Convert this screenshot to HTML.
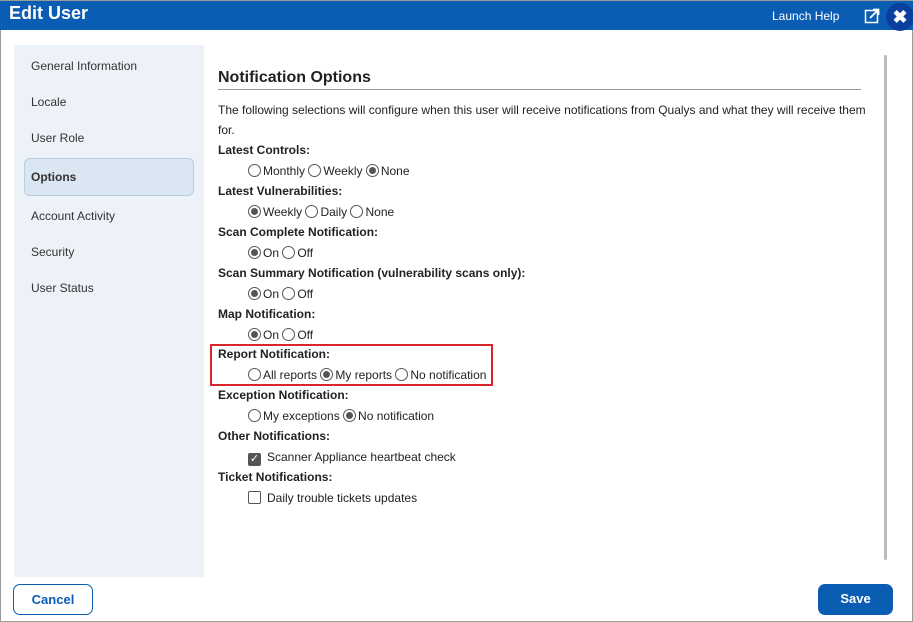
<!DOCTYPE html><html><head><style>
*{box-sizing:border-box;margin:0;padding:0}
body{width:913px;height:622px;position:relative;font-family:"Liberation Sans",Arial,sans-serif;background:#fff;overflow:hidden;font-size:12px;color:#222}
.frame{position:absolute;inset:0;border:1px solid #9a9a9a}
.hdr{position:absolute;left:0;top:0;width:913px;height:30px;background:#0b5db3;border-top:1px solid #9a9a9a}
.hdr .t{position:absolute;left:9px;top:2px;color:#fff;font-weight:bold;font-size:18px}
.hdr .h{position:absolute;left:772px;top:8px;color:#fff;font-size:12px}
.x{position:absolute;left:886px;top:2px;width:28px;height:28px;border-radius:50%;background:#0a3fa0;color:#fff;font-weight:bold;font-size:18px;text-align:center;line-height:28px}
.side{position:absolute;left:14px;top:45px;width:190px;height:532px;background:#edf1f8}
.side div{position:absolute;left:17px;font-size:12px;color:#333}
.sel{position:absolute;left:24px;top:158px;width:170px;height:38px;background:#dbe6f3;border:1px solid #b8cde4;border-radius:6px}
.l{position:absolute;left:218px;font-size:12px;white-space:nowrap}
.b{font-weight:bold}
.r{display:inline-block;width:13px;height:13px;border:1px solid #555;border-radius:50%;vertical-align:-2px;margin-right:2px;position:relative;background:#fff}
.r.on::after{content:"";position:absolute;left:2px;top:2px;width:7px;height:7px;border-radius:50%;background:#555}
.cb{display:inline-block;width:13px;height:13px;border:1px solid #555;border-radius:2px;vertical-align:-2px;margin-right:6px;position:relative}
.cb.on{background:#555;color:#fff;font-size:11px;line-height:11px;text-align:center}
.o{left:248px}
.btn{position:absolute;top:584px;height:31px;border-radius:7px;font-weight:bold;font-size:13px;text-align:center;line-height:30px}
</style></head><body>
<div class="frame"></div>
<div class="hdr"><div class="t">Edit User</div><div class="h">Launch Help</div>
<svg style="position:absolute;left:864px;top:7px" width="16" height="16" viewBox="0 0 16 16"><rect x="1.5" y="2.5" width="12" height="12" fill="none" stroke="#fff" stroke-width="1.5"/><path d="M6 10L14 2M9 1.5h5.5V7" fill="none" stroke="#fff" stroke-width="1.8"/></svg>
<div class="x">✖</div></div>
<div class="side">
<div style="top:14px">General Information</div><div style="top:50px">Locale</div><div style="top:86px">User Role</div>
<div style="top:164px">Account Activity</div><div style="top:200px">Security</div><div style="top:236px">User Status</div></div>
<div class="sel"></div><div style="position:absolute;left:31px;top:170px;font-weight:bold;color:#333">Options</div>
<div style="position:absolute;left:884px;top:55px;width:3px;height:505px;background:#bbb;border-radius:2px"></div>
<div class="l b" style="top:69px;font-size:16px">Notification Options</div>
<div style="position:absolute;left:218px;top:89px;width:643px;height:1px;background:#999"></div>
<div class="l" style="top:103px">The following selections will configure when this user will receive notifications from Qualys and what they will receive them</div>
<div class="l" style="top:123px">for.</div>
<div class="l b" style="top:143px">Latest Controls:</div>
<div class="l o" style="top:164px"><span class="r"></span>Monthly <span class="r"></span>Weekly <span class="r on"></span>None</div>
<div class="l b" style="top:184px">Latest Vulnerabilities:</div>
<div class="l o" style="top:205px"><span class="r on"></span>Weekly <span class="r"></span>Daily <span class="r"></span>None</div>
<div class="l b" style="top:225px">Scan Complete Notification:</div>
<div class="l o" style="top:246px"><span class="r on"></span>On <span class="r"></span>Off</div>
<div class="l b" style="top:266px">Scan Summary Notification (vulnerability scans only):</div>
<div class="l o" style="top:287px"><span class="r on"></span>On <span class="r"></span>Off</div>
<div class="l b" style="top:307px">Map Notification:</div>
<div class="l o" style="top:328px"><span class="r on"></span>On <span class="r"></span>Off</div>
<div style="position:absolute;left:210px;top:344px;width:283px;height:42px;border:2px solid #d9262b"></div>
<div class="l b" style="top:347px">Report Notification:</div>
<div class="l o" style="top:368px"><span class="r"></span>All reports <span class="r on"></span>My reports <span class="r"></span>No notification</div>
<div class="l b" style="top:388px">Exception Notification:</div>
<div class="l o" style="top:409px"><span class="r"></span>My exceptions <span class="r on"></span>No notification</div>
<div class="l b" style="top:429px">Other Notifications:</div>
<div class="l o" style="top:450px"><span class="cb on" style="vertical-align:-1px">✓</span>Scanner Appliance heartbeat check</div>
<div class="l b" style="top:470px">Ticket Notifications:</div>
<div class="l o" style="top:491px"><span class="cb"></span>Daily trouble tickets updates</div>
<div class="btn" style="left:13px;width:80px;border:1px solid #0b5db3;color:#0b5db3;background:#fff">Cancel</div>
<div class="btn" style="left:818px;width:75px;background:#0b5db3;color:#fff">Save</div>
</body></html>
